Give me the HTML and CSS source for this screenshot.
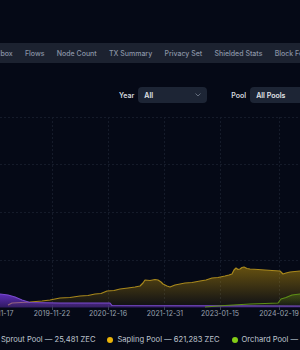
FILE: index.html
```html
<!DOCTYPE html>
<html lang="en">
<head>
    <meta charset="UTF-8">
    <meta name="viewport" content="width=device-width, initial-scale=1.0">
    <title>Shielded Pools</title>
    <link rel="stylesheet" href="styles.css">
</head>
<body>
    <div class="page">
        <nav class="tabs">
            <div class="tab-track">
                <span class="tab">Sandbox</span>
                <span class="tab">Flows</span>
                <span class="tab">Node Count</span>
                <span class="tab">TX Summary</span>
                <span class="tab">Privacy Set</span>
                <span class="tab">Shielded Stats</span>
                <span class="tab">Block Fees</span>
            </div>
        </nav>

        <div class="filters">
            <span class="filter-label">Year</span>
            <div class="select select-year">
                <span>All</span>
                <svg class="chevron" width="6" height="4" viewBox="0 0 6 4"><path d="M0.8 0.8 L3 3 L5.2 0.8" fill="none" stroke="#6b7585" stroke-width="0.9" stroke-linecap="round" stroke-linejoin="round"/></svg>
            </div>
            <span class="filter-label label-pool">Pool</span>
            <div class="select select-pool">
                <span>All Pools</span>
                <svg class="chevron" width="6" height="4" viewBox="0 0 6 4"><path d="M0.8 0.8 L3 3 L5.2 0.8" fill="none" stroke="#6b7585" stroke-width="0.9" stroke-linecap="round" stroke-linejoin="round"/></svg>
            </div>
        </div>

        <svg class="chart" width="300" height="212" viewBox="0 0 300 212">
            <defs>
                <linearGradient id="saplingFill" x1="0" y1="0" x2="0" y2="1">
                    <stop offset="0" stop-color="#eab308" stop-opacity="0.42"/>
                    <stop offset="1" stop-color="#eab308" stop-opacity="0.04"/>
                </linearGradient>
                <linearGradient id="sproutFill" x1="0" y1="0" x2="0" y2="1">
                    <stop offset="0" stop-color="#7c3aed" stop-opacity="0.75"/>
                    <stop offset="1" stop-color="#7c3aed" stop-opacity="0.35"/>
                </linearGradient>
                <linearGradient id="orchardFill" x1="0" y1="0" x2="0" y2="1">
                    <stop offset="0" stop-color="#84cc16" stop-opacity="0.25"/>
                    <stop offset="1" stop-color="#84cc16" stop-opacity="0.03"/>
                </linearGradient>
            </defs>

            <!-- grid -->
            <g class="grid">
                <line x1="0" y1="7.5" x2="300" y2="7.5"/>
                <line x1="0" y1="54.5" x2="300" y2="54.5"/>
                <line x1="0" y1="102.5" x2="300" y2="102.5"/>
                <line x1="0" y1="150.5" x2="300" y2="150.5"/>
                <line x1="52.5" y1="7" x2="52.5" y2="197"/>
                <line x1="108.5" y1="7" x2="108.5" y2="197"/>
                <line x1="164.5" y1="7" x2="164.5" y2="197"/>
                <line x1="220.5" y1="7" x2="220.5" y2="197"/>
                <line x1="279.5" y1="7" x2="279.5" y2="197"/>
            </g>

            <!-- sapling -->
            <path d="M8,195 L12,193 L30,192 L42,191 L50,190 L60,188 L70,187.5 L80,186 L88,185.5 L95,184 L101,183.5 L107,181 L114,180.5 L120,179 L128,178 L135,177 L140,176 L143,173 L145,170 L150,170.5 L155,169.5 L158,170 L161,172 L163,174 L167,176 L170,177 L175,175 L180,174 L185,173 L192,172.5 L200,171 L206,170 L212,168 L218,167.5 L225,166 L229,165 L232,164 L234,160 L236,158 L238,159.5 L240,159 L242,157.5 L244,157 L247,158.5 L250,159 L258,159.5 L265,160 L272,160.5 L280,161 L283,164 L286,163 L290,162 L295,161.5 L300,161 L300,197 L8,197 Z" fill="url(#saplingFill)"/>
            <path d="M8,195 L12,193 L30,192 L42,191 L50,190 L60,188 L70,187.5 L80,186 L88,185.5 L95,184 L101,183.5 L107,181 L114,180.5 L120,179 L128,178 L135,177 L140,176 L143,173 L145,170 L150,170.5 L155,169.5 L158,170 L161,172 L163,174 L167,176 L170,177 L175,175 L180,174 L185,173 L192,172.5 L200,171 L206,170 L212,168 L218,167.5 L225,166 L229,165 L232,164 L234,160 L236,158 L238,159.5 L240,159 L242,157.5 L244,157 L247,158.5 L250,159 L258,159.5 L265,160 L272,160.5 L280,161 L283,164 L286,163 L290,162 L295,161.5 L300,161" fill="none" stroke="#a8881c" stroke-width="1.2" stroke-linejoin="round"/>

            <!-- sprout -->
            <path d="M0,184 L8,185 L15,187 L22,190 L30,192.5 L60,193 L110,193 L112,195.5 L300,196 L300,197.5 L0,197.5 Z" fill="url(#sproutFill)"/>
            <path d="M0,184 L8,185 L15,187 L22,190 L30,192.5 L60,193 L110,193 L112,195.5 L300,196" fill="none" stroke="#7b4bd0" stroke-width="1.2" stroke-linejoin="round"/>

            <!-- orchard -->
            <path d="M205,197 L225,195.5 L250,194 L265,193.5 L278,193 L281,189 L286,187.5 L292,185 L300,184 L300,197 Z" fill="url(#orchardFill)"/>
            <path d="M205,197 L225,195.5 L250,194 L265,193.5 L278,193 L281,189 L286,187.5 L292,185 L300,184" fill="none" stroke="#5d8f16" stroke-width="1.1" stroke-linejoin="round"/>

            <!-- axis -->
            <g class="ticks">
                <line x1="52.5" y1="197" x2="52.5" y2="200"/>
                <line x1="108.5" y1="197" x2="108.5" y2="200"/>
                <line x1="164.5" y1="197" x2="164.5" y2="200"/>
                <line x1="220.5" y1="197" x2="220.5" y2="200"/>
                <line x1="279.5" y1="197" x2="279.5" y2="200"/>
            </g>
            <g class="axis-labels">
                <text x="-4" y="205.5">2018-11-17</text>
                <text x="52" y="205.5">2019-11-22</text>
                <text x="108" y="205.5">2020-12-16</text>
                <text x="165" y="205.5">2021-12-31</text>
                <text x="220" y="205.5">2023-01-15</text>
                <text x="279" y="205.5">2024-02-19</text>
            </g>
        </svg>

        <div class="legend">
            <div class="legend-item"><span class="dot dot-sprout"></span>Sprout Pool — 25,481 ZEC</div>
            <div class="legend-item"><span class="dot dot-sapling"></span>Sapling Pool — 621,283 ZEC</div>
            <div class="legend-item"><span class="dot dot-orchard"></span>Orchard Pool — 4,365,614 ZEC</div>
        </div>
    </div>
</body>
</html>
```

FILE: styles.css
```css
html, body {
    margin: 0;
    padding: 0;
    overflow: hidden;
}

body {
    background-color: #050916;
    font-family: Inter, "Noto Sans", sans-serif;
    color: #c3c9d3;
}

.page {
    width: 300px;
    height: 350px;
    padding-top: 43px;
    box-sizing: border-box;
}

.tabs {
    height: 20px;
    background-color: #1c2230;
    overflow: hidden;
}

.tab-track {
    display: flex;
    align-items: center;
    gap: 12.2px;
    height: 100%;
    margin-left: -16.6px;
    white-space: nowrap;
}

.tab {
    font-size: 7px;
    font-weight: 500;
    color: #8a94a6;
}

.filters {
    display: flex;
    align-items: center;
    margin-top: 24px;
    padding-left: 119px;
    height: 16px;
    white-space: nowrap;
}

.filter-label {
    font-size: 7px;
    font-weight: 600;
    color: #d4d8df;
    margin-right: 4px;
}

.label-pool {
    margin-left: 24px;
}

.select {
    display: flex;
    align-items: center;
    justify-content: space-between;
    flex-shrink: 0;
    height: 16px;
    padding: 0 6px;
    box-sizing: border-box;
    background-color: #1d2535;
    border-radius: 4px;
    font-size: 7px;
    font-weight: 600;
    color: #e3e6eb;
}

.select-year {
    width: 69px;
}

.select-pool {
    width: 90px;
}

.chart {
    display: block;
    margin-top: 7px;
    overflow: visible;
}

.grid line {
    stroke: #151b2a;
    stroke-width: 1;
    stroke-dasharray: 2 2;
}

.ticks line {
    stroke: #3a4252;
    stroke-width: 1;
}

.axis-labels text {
    font-size: 7px;
    fill: #9aa2b0;
    text-anchor: middle;
    font-family: Inter, "Noto Sans", sans-serif;
}

.legend {
    display: flex;
    align-items: center;
    gap: 12px;
    margin-top: 13px;
    margin-left: -9px;
    white-space: nowrap;
    font-size: 7.6px;
    color: #bfc5cf;
}

.legend-item {
    display: flex;
    align-items: center;
    gap: 4px;
}

.dot {
    width: 6px;
    height: 6px;
    border-radius: 50%;
    flex-shrink: 0;
}

.dot-sprout {
    background-color: #7c3aed;
}

.dot-sapling {
    background-color: #eab308;
}

.dot-orchard {
    background-color: #84cc16;
}
```
